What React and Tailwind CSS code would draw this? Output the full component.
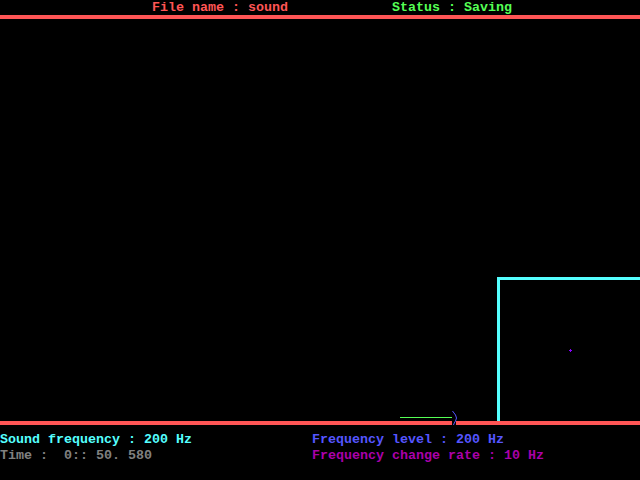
export default function App() {
  const font = { fontFamily: '"Liberation Mono", "DejaVu Sans Mono", monospace' };
  return (
    <div
      className="relative w-[640px] h-[480px] bg-black overflow-hidden flex flex-col text-[13.33px] leading-4 font-bold whitespace-pre"
      style={font}
    >
      <div className="h-[15px] flex pl-[152px]">
        <span className="w-[240px] text-[#ff5555]">File name : sound</span>
        <span className="text-[#55ff55]">Status : Saving</span>
      </div>
      <div className="h-1 bg-[#ff5555]" />
      <div className="relative h-[402px]">
        <div className="absolute left-[497px] top-[258px] right-0 bottom-0 border-l-[3px] border-t-[3px] border-[#55ffff]" />
      </div>
      <div className="h-1 bg-[#ff5555]" />
      <div className="pt-[7px] flex">
        <div className="w-[312px] flex flex-col">
          <span className="h-4 text-[#55ffff]">Sound frequency : 200 Hz</span>
          <span className="h-4 text-[#808080]">Time :  0:: 50. 580</span>
        </div>
        <div className="flex flex-col">
          <span className="h-4 text-[#5555ff]">Frequency level : 200 Hz</span>
          <span className="h-4 text-[#aa00aa]">Frequency change rate : 10 Hz</span>
        </div>
      </div>
      <svg
        className="absolute left-0 top-0 pointer-events-none"
        width="640"
        height="480"
        viewBox="0 0 640 480"
        shapeRendering="crispEdges"
      >
        <rect x="400" y="417" width="52" height="1" fill="#55ff55" />
        <rect x="452" y="421" width="4" height="4" fill="#000000" />
        <path
          d="M452.5 411 Q454 413 455.5 415 L456.5 418 L455.5 421 Q454 423 453.5 425"
          stroke="#5555ff"
          strokeWidth="1"
          fill="none"
          shapeRendering="auto"
        />
        <rect x="569" y="350" width="3" height="1" fill="#8800ff" />
        <rect x="570" y="349" width="1" height="3" fill="#8800ff" />
      </svg>
    </div>
  );
}
